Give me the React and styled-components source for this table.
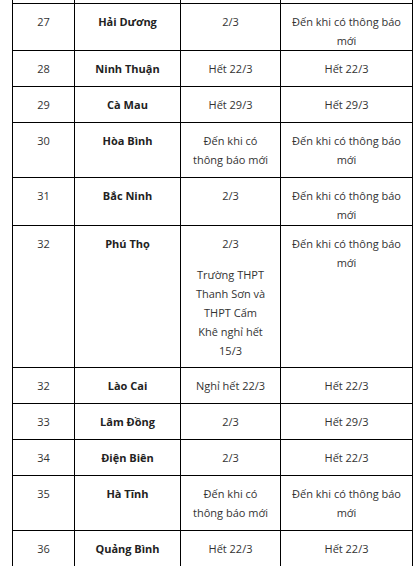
import React from "react";
import styled, { createGlobalStyle } from "styled-components";

const GlobalStyle = createGlobalStyle`
  html, body {
    margin: 0;
    padding: 0;
    background: #fff;
  }
  body {
    font-family: "Open Sans", "Noto Sans", sans-serif;
    font-size: 11px;
    color: #333;
  }
`;

const Page = styled.div`
  width: 419px;
  height: 566px;
  overflow: hidden;
  padding-left: 12px;
  box-sizing: border-box;
`;

const Table = styled.div`
  display: flex;
  flex-direction: column;
  width: 401px;
  border-left: 1px solid #000;
  margin-top: ${(props) => props.offset}px;
`;

const Row = styled.div`
  display: grid;
  grid-template-columns: 62px 106px 100px 132px;
  height: ${(props) => props.h}px;
`;

const Cell = styled.div`
  box-sizing: border-box;
  border-right: 1px solid #000;
  border-bottom: 1px solid #000;
  padding: 8px 8px 0;
  text-align: center;
  line-height: 19px;
  white-space: pre-line;
  font-weight: ${(props) => (props.bold ? 700 : 400)};
  color: ${(props) => (props.bold ? "#222" : "#333")};
  overflow: visible;
`;

const Para = styled.p`
  margin: 0 0 12px;
  &:last-child {
    margin-bottom: 0;
  }
`;

const NEW = "Đến khi có thông báo mới";

const rows = [
  { no: "", name: "", start: "", end: "", h: 40 },
  { no: "27", name: "Hải Dương", start: "2/3", end: NEW, h: 47 },
  { no: "28", name: "Ninh Thuận", start: "Hết 22/3", end: "Hết 22/3", h: 36 },
  { no: "29", name: "Cà Mau", start: "Hết 29/3", end: "Hết 29/3", h: 36 },
  { no: "30", name: "Hòa Bình", start: NEW, end: NEW, h: 55 },
  { no: "31", name: "Bắc Ninh", start: "2/3", end: NEW, h: 48 },
  {
    no: "32",
    name: "Phú Thọ",
    start: ["2/3", "Trường THPT\nThanh Sơn và\nTHPT Cấm\nKhê nghỉ hết\n15/3"],
    end: NEW,
    h: 142,
  },
  { no: "32", name: "Lào Cai", start: "Nghỉ hết 22/3", end: "Hết 22/3", h: 36 },
  { no: "33", name: "Lâm Đồng", start: "2/3", end: "Hết 29/3", h: 36 },
  { no: "34", name: "Điện Biên", start: "2/3", end: "Hết 22/3", h: 36 },
  { no: "35", name: "Hà Tĩnh", start: NEW, end: NEW, h: 55 },
  { no: "36", name: "Quảng Bình", start: "Hết 22/3", end: "Hết 22/3", h: 36 },
];

const Content = ({ value }) =>
  Array.isArray(value) ? value.map((v, i) => <Para key={i}>{v}</Para>) : value;

const App = () => {
  return (
    <>
      <GlobalStyle />
      <Page>
        <Table offset={-36}>
          {rows.map((r, i) => (
            <Row key={i} h={r.h}>
              <Cell>{r.no}</Cell>
              <Cell bold>{r.name}</Cell>
              <Cell>
                <Content value={r.start} />
              </Cell>
              <Cell>{r.end}</Cell>
            </Row>
          ))}
        </Table>
      </Page>
    </>
  );
};

export default App;
